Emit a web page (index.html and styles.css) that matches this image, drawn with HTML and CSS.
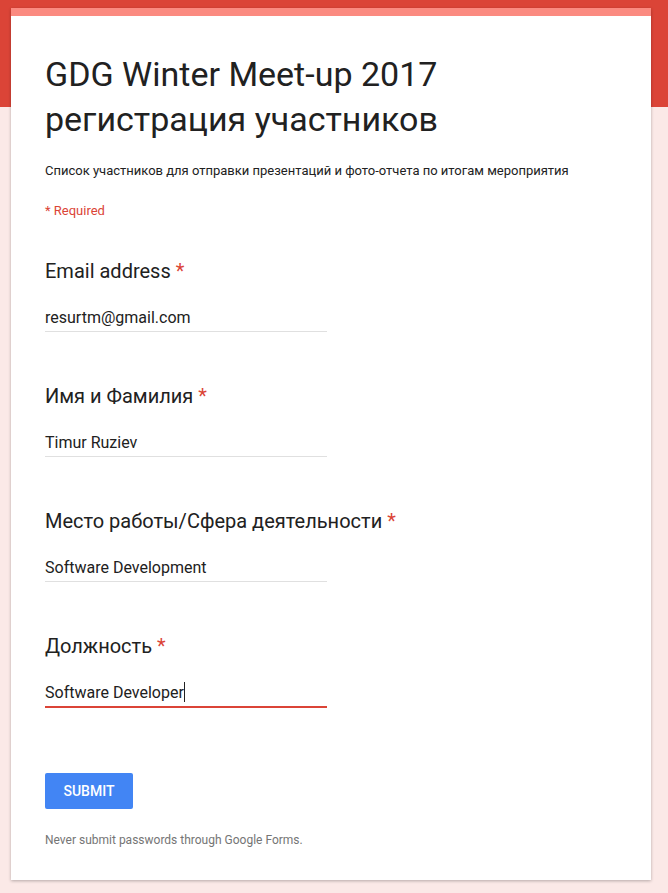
FILE: index.html
```html
<!DOCTYPE html>
<html lang="ru">
<head>
<meta charset="utf-8">
<link rel="stylesheet" href="styles.css">
</head>
<body>
<div class="band"></div>
<div class="page">
  <form class="card">
    <div class="stripe"></div>
    <div class="content">
      <h1 class="title">GDG Winter Meet-up 2017<br>регистрация участников</h1>
      <p class="desc">Список участников для отправки презентаций и фото-отчета по итогам мероприятия</p>
      <p class="req">* Required</p>
      <div class="field">
        <div class="label">Email address <span class="star">*</span></div>
        <div class="input">resurtm@gmail.com</div>
      </div>
      <div class="field">
        <div class="label">Имя и Фамилия <span class="star">*</span></div>
        <div class="input">Timur Ruziev</div>
      </div>
      <div class="field">
        <div class="label">Место работы/Сфера деятельности <span class="star">*</span></div>
        <div class="input">Software Development</div>
      </div>
      <div class="field">
        <div class="label">Должность <span class="star">*</span></div>
        <div class="input active">Software Developer<span class="caret"></span></div>
      </div>
      <div class="actions">
        <button type="button" class="submit">SUBMIT</button>
      </div>
      <p class="note">Never submit passwords through Google Forms.</p>
    </div>
  </form>
</div>
</body>
</html>
```
FILE: styles.css
```css
html, body {
  margin: 0;
  padding: 0;
}
body {
  background: #fbe9e7;
  font-family: Roboto, "Noto Sans", sans-serif;
  color: #212121;
  position: relative;
  min-height: 893px;
}
.band {
  position: absolute;
  left: 0;
  top: 0;
  right: 0;
  height: 107px;
  background: #db4437;
}
.page {
  position: relative;
  padding: 8px 17px 12px 11px;
}
.card {
  width: 640px;
  background: #fff;
  box-shadow: 0 1px 3px rgba(0,0,0,0.28);
  height: 872px;
  box-sizing: border-box;
}
.stripe {
  height: 8px;
  background: #fb8a80;
}
.content {
  padding: 0 34px;
}
.title {
  margin: 0;
  padding-top: 36px;
  font-weight: 400;
  font-size: 34px;
  line-height: 45px;
  color: #212121;
}
.desc {
  margin: 20px 0 0;
  font-size: 13px;
  line-height: 18px;
  color: #212121;
}
.req {
  margin: 22px 0 0;
  font-size: 13px;
  line-height: 18px;
  color: #db4437;
}
.field {
  margin-top: 37px;
}
.field + .field {
  margin-top: 50px;
}
.label {
  font-size: 20px;
  line-height: 28px;
  color: #212121;
}
.star {
  color: #db4437;
}
.input {
  margin-top: 22px;
  width: 282px;
  font-size: 16px;
  line-height: 22px;
  padding-bottom: 2px;
  border-bottom: 1px solid #e0e0e0;
  color: #212121;
}
.input.active {
  border-bottom: 2px solid #db4437;
  padding-bottom: 2px;
}
.caret {
  display: inline-block;
  width: 1px;
  height: 20px;
  background: #212121;
  vertical-align: -4px;
}
.actions {
  margin-top: 65px;
}
.submit {
  display: block;
  width: 88px;
  height: 36px;
  border: 0;
  border-radius: 2px;
  background: #4285f4;
  color: #fff;
  font-family: Roboto, sans-serif;
  font-weight: 500;
  font-size: 14px;
  padding: 0;
}
.note {
  margin: 23px 0 0;
  font-size: 12px;
  line-height: 16px;
  color: #757575;
}
```
